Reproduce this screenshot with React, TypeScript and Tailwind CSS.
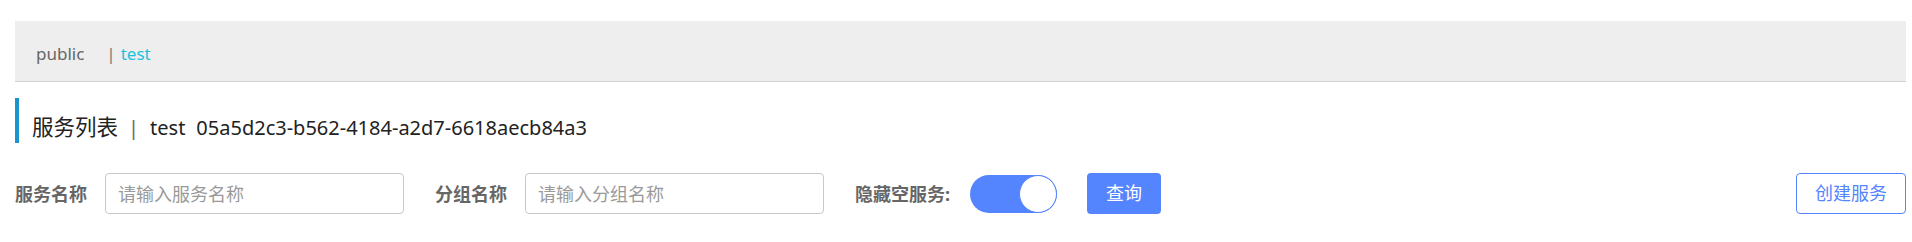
import React from "react";

export default function App() {
  const cjk = { fontFamily: '"Noto Sans", "Noto Sans CJK SC", sans-serif' };
  return (
    <div className="w-full bg-white pl-[15px] pr-[6px] pt-[21px]" style={cjk}>
      {/* breadcrumb bar */}
      <div className="flex h-[61px] items-center border-b border-[#d2d2d2] bg-[#eeeeee] pl-[21px] pt-[6px] text-[17px] leading-[24px]">
        <span className="text-[#666666]">public</span>
        <span className="ml-[22px] text-[#777777]">|</span>
        <span className="ml-[5px] text-[#1fc0da]">test</span>
      </div>

      {/* title */}
      <div className="mt-[16px] h-[45px] border-l-4 border-[#1a94cc] pl-[13px] pt-[18px] leading-[22px] text-[#222222]">
        <span className="text-[21.5px]">服务列表</span>
        <span className="ml-[10px] text-[20px] text-[#666666]">|</span>
        <span className="ml-[11px] text-[20px]">test</span>
        <span className="ml-[11px] text-[20px]">05a5d2c3-b562-4184-a2d7-6618aecb84a3</span>
      </div>

      {/* form row */}
      <div className="mt-[30px] flex h-[41px] items-center">
        <span className="w-[72px] text-[18px] font-bold leading-[24px] text-[#666666]">服务名称</span>
        <input
          className="ml-[18px] h-[41px] w-[299px] rounded-[4px] border border-[#c8c8c8] bg-white pl-[12px] text-[18px] text-[#333] outline-none placeholder:text-[#9a9a9a]"
          placeholder="请输入服务名称"
        />
        <span className="ml-[31px] w-[72px] text-[18px] font-bold leading-[24px] text-[#666666]">分组名称</span>
        <input
          className="ml-[18px] h-[41px] w-[299px] rounded-[4px] border border-[#c8c8c8] bg-white pl-[12px] text-[18px] text-[#333] outline-none placeholder:text-[#9a9a9a]"
          placeholder="请输入分组名称"
        />
        <span className="ml-[31px] text-[18px] font-bold leading-[24px] text-[#666666]">隐藏空服务:</span>
        <div className="ml-[20px] flex h-[38px] w-[87px] items-center justify-end rounded-full bg-[#5584ff]">
          <div className="h-[38px] w-[38px] rounded-full border border-[#5584ff] bg-white" />
        </div>
        <button className="ml-[30px] flex h-[41px] w-[74px] items-center justify-center rounded-[4px] bg-[#5584ff] text-[18px] text-white">
          查询
        </button>
        <button className="ml-auto flex h-[41px] w-[110px] items-center justify-center rounded-[4px] border border-[#5584ff] bg-white text-[18px] text-[#5584ff]">
          创建服务
        </button>
      </div>
      <div className="h-[26px]" />
    </div>
  );
}
